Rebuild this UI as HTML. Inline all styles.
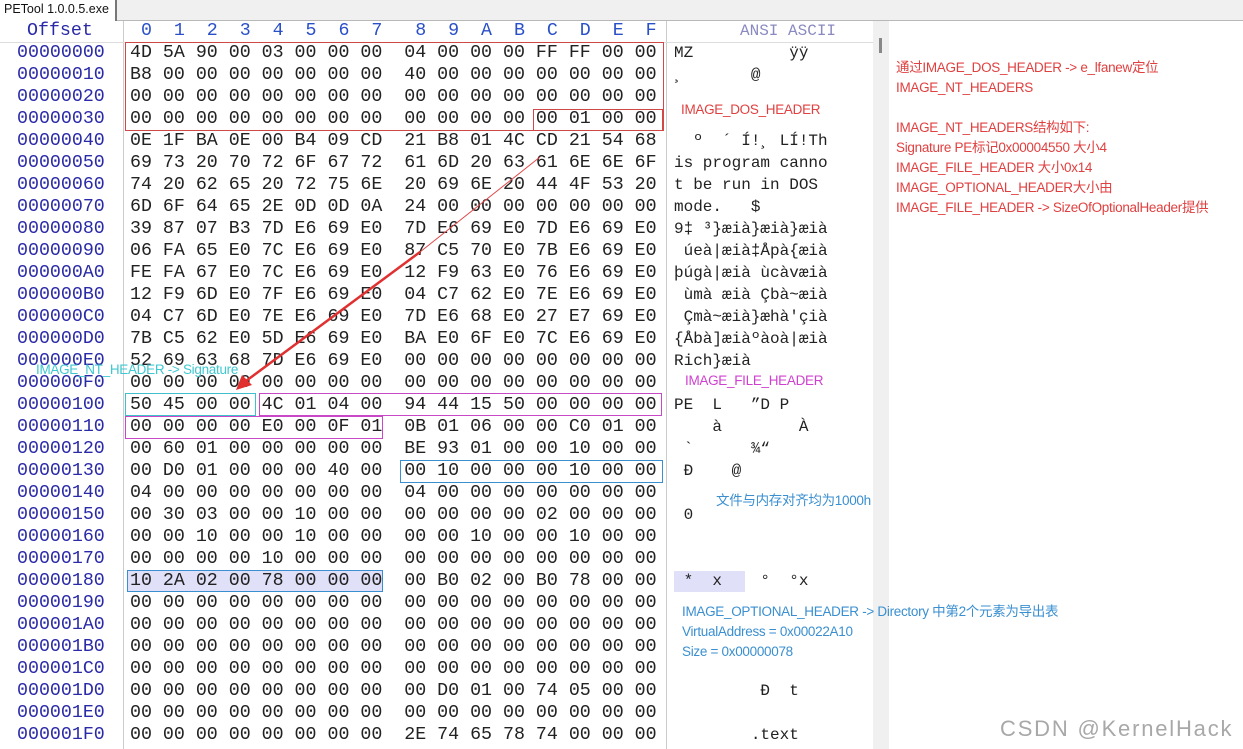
<!DOCTYPE html>
<html><head><meta charset="utf-8"><style>
body{margin:0;width:1243px;height:749px;overflow:hidden;background:#fff;position:relative;font-family:"Liberation Mono",monospace}
.a{position:absolute;white-space:pre}
.hx{font-size:18.3px;line-height:22px;color:#222;left:130px;top:42px}
.of{font-size:18.3px;line-height:22px;color:#2a2aa8;left:17px;top:42px}
.as{font-size:16px;line-height:22px;color:#222;left:674px;top:42px}
.lbl{position:absolute;font-family:"Liberation Sans","Noto Sans CJK SC",sans-serif;font-size:13.5px;white-space:pre;letter-spacing:-0.3px}
.box{position:absolute;box-sizing:border-box}
</style></head><body>
<div style="position:absolute;left:0;top:0;width:1243px;height:20px;background:#f0f0f0;border-bottom:1px solid #b8b8b8"></div>
<div style="position:absolute;left:0;top:0;width:115px;height:21px;background:#fff;border-right:2px solid #777"></div>
<div class="lbl" style="left:4px;top:2px;color:#111;font-size:12.5px;letter-spacing:0">PETool 1.0.0.5.exe</div>
<div style="position:absolute;left:873px;top:21px;width:16px;height:728px;background:#f0f0f0"></div>
<div style="position:absolute;left:879px;top:38px;width:3px;height:15px;background:#888"></div>
<div style="position:absolute;left:123px;top:21px;width:1px;height:728px;background:#ccc"></div>
<div style="position:absolute;left:666px;top:21px;width:1px;height:728px;background:#ccc"></div>
<div style="position:absolute;left:0;top:42px;width:873px;height:1px;background:#ddd"></div>
<div class="a" style="font-size:18.3px;left:27px;top:20px;line-height:22px;color:#2a2aa8">Offset</div>
<div class="a" style="font-size:18.3px;left:130px;top:20px;line-height:22px;color:#2a50c8"> 0  1  2  3  4  5  6  7   8  9  A  B  C  D  E  F</div>
<div class="a" style="font-size:16px;left:740px;top:20px;line-height:22px;color:#8a8ac0">ANSI ASCII</div>
<div class="box" style="left:674px;top:571px;width:71px;height:21px;background:#e0e0f8"></div>
<div class="box" style="left:127px;top:570px;width:256px;height:22px;background:#e0e0f8;border:1px solid #3a8fd0"></div>
<div class="a of">00000000
00000010
00000020
00000030
00000040
00000050
00000060
00000070
00000080
00000090
000000A0
000000B0
000000C0
000000D0
000000E0
000000F0
00000100
00000110
00000120
00000130
00000140
00000150
00000160
00000170
00000180
00000190
000001A0
000001B0
000001C0
000001D0
000001E0
000001F0</div>
<div class="a hx">4D 5A 90 00 03 00 00 00  04 00 00 00 FF FF 00 00
B8 00 00 00 00 00 00 00  40 00 00 00 00 00 00 00
00 00 00 00 00 00 00 00  00 00 00 00 00 00 00 00
00 00 00 00 00 00 00 00  00 00 00 00 00 01 00 00
0E 1F BA 0E 00 B4 09 CD  21 B8 01 4C CD 21 54 68
69 73 20 70 72 6F 67 72  61 6D 20 63 61 6E 6E 6F
74 20 62 65 20 72 75 6E  20 69 6E 20 44 4F 53 20
6D 6F 64 65 2E 0D 0D 0A  24 00 00 00 00 00 00 00
39 87 07 B3 7D E6 69 E0  7D E6 69 E0 7D E6 69 E0
06 FA 65 E0 7C E6 69 E0  87 C5 70 E0 7B E6 69 E0
FE FA 67 E0 7C E6 69 E0  12 F9 63 E0 76 E6 69 E0
12 F9 6D E0 7F E6 69 E0  04 C7 62 E0 7E E6 69 E0
04 C7 6D E0 7E E6 69 E0  7D E6 68 E0 27 E7 69 E0
7B C5 62 E0 5D E6 69 E0  BA E0 6F E0 7C E6 69 E0
52 69 63 68 7D E6 69 E0  00 00 00 00 00 00 00 00
00 00 00 00 00 00 00 00  00 00 00 00 00 00 00 00
50 45 00 00 4C 01 04 00  94 44 15 50 00 00 00 00
00 00 00 00 E0 00 0F 01  0B 01 06 00 00 C0 01 00
00 60 01 00 00 00 00 00  BE 93 01 00 00 10 00 00
00 D0 01 00 00 00 40 00  00 10 00 00 00 10 00 00
04 00 00 00 00 00 00 00  04 00 00 00 00 00 00 00
00 30 03 00 00 10 00 00  00 00 00 00 02 00 00 00
00 00 10 00 00 10 00 00  00 00 10 00 00 10 00 00
00 00 00 00 10 00 00 00  00 00 00 00 00 00 00 00
10 2A 02 00 78 00 00 00  00 B0 02 00 B0 78 00 00
00 00 00 00 00 00 00 00  00 00 00 00 00 00 00 00
00 00 00 00 00 00 00 00  00 00 00 00 00 00 00 00
00 00 00 00 00 00 00 00  00 00 00 00 00 00 00 00
00 00 00 00 00 00 00 00  00 00 00 00 00 00 00 00
00 00 00 00 00 00 00 00  00 D0 01 00 74 05 00 00
00 00 00 00 00 00 00 00  00 00 00 00 00 00 00 00
00 00 00 00 00 00 00 00  2E 74 65 78 74 00 00 00</div>
<div class="a as">MZ          ÿÿ
¸       @


  º  ´ Í!¸ LÍ!Th
is program canno
t be run in DOS 
mode.   $
9‡ ³}æià}æià}æià
 úeà|æià‡Åpà{æià
þúgà|æià ùcàvæià
 ùmà æià Çbà~æià
 Çmà~æià}æhà'çià
{Åbà]æiàºàoà|æià
Rich}æià

PE  L   ”D P
    à        À
 `      ¾“
 Ð    @

 0


 *  x    °  °x




         Ð  t

        .text</div>
<div class="box" style="left:125px;top:42px;width:539px;height:89px;border:1px solid #d04848"></div>
<div class="box" style="left:533px;top:109px;width:130px;height:22px;border:1px solid #d04848"></div>
<div class="box" style="left:125px;top:393px;width:131px;height:23px;border:1px solid #40c0cc"></div>
<div class="box" style="left:259px;top:393px;width:403px;height:23px;border:1px solid #c848c8"></div>
<div class="box" style="left:125px;top:416px;width:258px;height:23px;border:1px solid #c848c8"></div>
<div class="box" style="left:400px;top:460px;width:263px;height:23px;border:1px solid #3a8fd0"></div>
<div class="lbl" style="left:681px;top:102px;color:#e04040">IMAGE_DOS_HEADER</div>
<div class="lbl" style="left:36px;top:362px;color:#40c8d0">IMAGE_NT_HEADER -&gt; Signature</div>
<div class="lbl" style="left:685px;top:373px;color:#d040d0">IMAGE_FILE_HEADER</div>
<div class="lbl" style="left:716px;top:489px;color:#3a8fd0">文件与内存对齐均为1000h</div>
<div class="lbl" style="left:682px;top:602px;color:#3a8fd0;line-height:20px">IMAGE_OPTIONAL_HEADER -&gt; Directory 中第2个元素为导出表
VirtualAddress = 0x00022A10
Size = 0x00000078</div>
<div class="lbl" style="left:896px;top:58px;color:#e04040;line-height:20px">通过IMAGE_DOS_HEADER -&gt; e_lfanew定位
IMAGE_NT_HEADERS

IMAGE_NT_HEADERS结构如下:
Signature PE标记0x00004550 大小4
IMAGE_FILE_HEADER 大小0x14
IMAGE_OPTIONAL_HEADER大小由
IMAGE_FILE_HEADER -&gt; SizeOfOptionalHeader提供</div>
<div class="lbl" style="left:1000px;top:716px;color:#a8a8a8;font-size:22px;letter-spacing:1.8px">CSDN @KernelHack</div>
<svg style="position:absolute;left:0;top:0" width="1243" height="749">
<line x1="540" y1="157" x2="420" y2="252" stroke="#e04848" stroke-width="1"/>
<line x1="420" y1="252" x2="246" y2="381" stroke="#e03030" stroke-width="2.5"/>
<polygon points="236,390 242,375 252,385" fill="#e03030"/>
</svg>
</body></html>
